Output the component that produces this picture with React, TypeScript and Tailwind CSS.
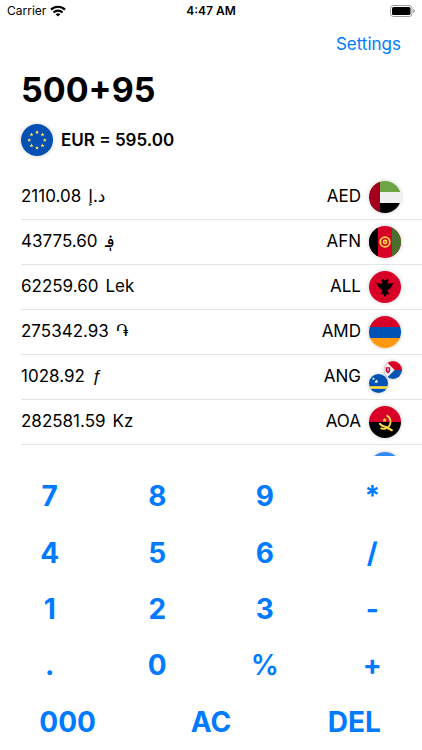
import { useState, type ReactNode } from "react";

const font = "font-['Inter','DejaVu_Sans',sans-serif]";

function Disc({ children, size = "size-8" }: { children: ReactNode; size?: string }) {
  return (
    <span className={`block shrink-0 overflow-hidden rounded-full shadow-[0_0_4px_rgba(0,0,0,0.22)] ${size}`}>
      <svg viewBox="0 0 32 32" className="block size-full" aria-hidden="true">
        {children}
      </svg>
    </span>
  );
}

function Stripes({ colors }: { colors: [string, string, string] }) {
  return (
    <>
      <rect width="32" height="11" fill={colors[0]} />
      <rect y="11" width="32" height="11" fill={colors[1]} />
      <rect y="22" width="32" height="10" fill={colors[2]} />
    </>
  );
}

const starPoints = "0,-1.9 0.6,-0.6 1.9,-0.5 0.9,0.4 1.2,1.7 0,1 -1.2,1.7 -0.9,0.4 -1.9,-0.5 -0.6,-0.6";

function EuroFlag() {
  return (
    <Disc>
      <rect width="32" height="32" fill="#0650b3" />
      {[0, 45, 90, 135, 180, 225, 270, 315].map((angle) => {
        const a = (angle * Math.PI) / 180;
        return (
          <polygon
            key={angle}
            points={starPoints}
            fill="#ffe15a"
            transform={`translate(${16 + 7.8 * Math.cos(a)} ${16 + 7.8 * Math.sin(a)})`}
          />
        );
      })}
    </Disc>
  );
}

const flags: Record<string, ReactNode> = {
  AED: (
    <Disc>
      <Stripes colors={["#6da544", "#f0f0f0", "#000000"]} />
      <rect width="11" height="32" fill="#a2001d" />
    </Disc>
  ),
  AFN: (
    <Disc>
      <rect width="32" height="32" fill="#d80027" />
      <rect width="9" height="32" fill="#000000" />
      <rect x="23" width="9" height="32" fill="#496e2d" />
      <circle cx="16" cy="16" r="4.8" fill="none" stroke="#ffda44" strokeWidth="1.8" />
      <circle cx="16" cy="16" r="2.4" fill="#ffda44" />
      <circle cx="16" cy="16" r="0.8" fill="#d80027" />
    </Disc>
  ),
  ALL: (
    <Disc>
      <rect width="32" height="32" fill="#d80027" />
      <path
        fill="#000000"
        d="M16 9.4 L14.5 8.2 L12 8.7 L13 10.3 L13.6 10.9 L12.8 12.8 L7.2 12 L9.2 14.6 L8.8 15.6 L10.4 16.2 L10.2 17.6 L12 17.4 L11.9 18.9 L13.4 18.6 L13 21.2 L11.6 22.2 L12.4 23.4 L14.2 22.4 L14.6 24 L16 25.8 L17.4 24 L17.8 22.4 L19.6 23.4 L20.4 22.2 L19 21.2 L18.6 18.6 L20.1 18.9 L20 17.4 L21.8 17.6 L21.6 16.2 L23.2 15.6 L22.8 14.6 L24.8 12 L19.2 12.8 L18.4 10.9 L19 10.3 L20 8.7 L17.5 8.2 Z"
      />
    </Disc>
  ),
  AMD: (
    <Disc>
      <Stripes colors={["#d80027", "#0052b4", "#ff9811"]} />
    </Disc>
  ),
  ANG: (
    <span className="flex size-8 shrink-0 items-end">
      <Disc size="size-[19px]">
        <rect width="32" height="32" fill="#0052b4" />
        <rect y="20.5" width="32" height="4.5" fill="#ffda44" />
        <polygon points={starPoints} fill="#ffffff" transform="translate(7.5 8) scale(1.3)" />
        <polygon points={starPoints} fill="#ffffff" transform="translate(12.5 12.5) scale(1.8)" />
      </Disc>
      <span className="-ml-1 mb-3.5">
        <Disc size="size-[18px]">
          <rect width="32" height="16" fill="#d80027" />
          <rect y="16" width="32" height="16" fill="#0052b4" />
          <path d="M0 0 H3 L19 16 L3 32 H0 Z" fill="#f0f0f0" />
          <path d="M3 11 H11 V17 Q11 20 7 22 Q3 20 3 17 Z" fill="#d80027" />
          <path d="M5.5 13 H8.5 V17 L7 19 L5.5 17 Z" fill="#a7c5e8" />
        </Disc>
      </span>
    </span>
  ),
  AOA: (
    <Disc>
      <rect width="32" height="16" fill="#d80027" />
      <rect y="16" width="32" height="16" fill="#000000" />
      <path d="M17.5 9.4 A7 7 0 1 1 11.5 22.2" fill="none" stroke="#ffda44" strokeWidth="1.9" />
      <path
        d="M11 17.8 Q13 20.4 17 21 L22.8 24.2"
        fill="none"
        stroke="#ffda44"
        strokeWidth="2.2"
        strokeLinecap="round"
      />
      <polygon points={starPoints} fill="#ffda44" transform="translate(15.6 14) scale(1.2)" />
    </Disc>
  ),
  ARS: (
    <Disc>
      <Stripes colors={["#338af3", "#f0f0f0", "#338af3"]} />
      <circle cx="16" cy="16" r="4" fill="#ffda44" />
    </Disc>
  ),
};

const rates = [
  { code: "AED", amount: "2110.08", symbol: "د.إ" },
  { code: "AFN", amount: "43775.60", symbol: "؋" },
  { code: "ALL", amount: "62259.60", symbol: "Lek" },
  { code: "AMD", amount: "275342.93", symbol: "֏" },
  { code: "ANG", amount: "1028.92", symbol: "ƒ" },
  { code: "AOA", amount: "282581.59", symbol: "Kz" },
];

const keyRows = [
  ["7", "8", "9", "*"],
  ["4", "5", "6", "/"],
  ["1", "2", "3", "-"],
  [".", "0", "%", "+"],
  ["000", "AC", "DEL"],
];

function StatusBar() {
  return (
    <div className="grid h-[22px] grid-cols-3 items-center px-[7px] text-xs">
      <div className="flex items-center gap-1">
        <span>Carrier</span>
        <svg viewBox="0 0 16 12" className="h-3 w-4" role="img" aria-label="Wi-Fi">
          <g fill="none" stroke="#000000" strokeWidth="2.2">
            <path d="M1 4.6 A10 10 0 0 1 15 4.6" />
            <path d="M3.5 7.5 A6.4 6.4 0 0 1 12.5 7.5" />
          </g>
          <path d="M8 11.6 L5.6 9.3 A3.6 3.6 0 0 1 10.4 9.3 Z" fill="#000000" />
        </svg>
      </div>
      <div className="text-center font-semibold">4:47 AM</div>
      <svg viewBox="0 0 25 12" className="h-3 w-[25px] justify-self-end" role="img" aria-label="Battery full">
        <rect x="0.5" y="0.5" width="21.5" height="11" rx="3" fill="none" stroke="#9a9a9a" />
        <rect x="2" y="2" width="18.5" height="8" rx="1.6" fill="#000000" />
        <path d="M23.2 4 Q24.8 4.6 24.8 6 Q24.8 7.4 23.2 8 Z" fill="#9a9a9a" />
      </svg>
    </div>
  );
}

export default function App() {
  const [expression, setExpression] = useState("500+95");
  const [total, setTotal] = useState("595.00");

  function press(key: string) {
    if (key === "AC") {
      setExpression("0");
      setTotal("0.00");
    } else if (key === "DEL") {
      setExpression((e) => e.slice(0, -1) || "0");
    } else {
      setExpression((e) => (e === "0" ? key : e + key));
    }
  }

  return (
    <div className={`flex h-screen flex-col bg-white text-black ${font}`}>
      <StatusBar />
      <header className="flex h-11 items-center justify-end px-[21px]">
        <button type="button" className="pt-0.5 text-[17px] text-[#007aff]">
          Settings
        </button>
      </header>
      <section className="px-[21px]">
        <output className="block h-12 text-[34px] leading-12 font-bold">{expression}</output>
        <div className="mt-2.5 mb-[19px] flex items-center gap-2 text-[17px] font-semibold">
          <EuroFlag />
          <span className="pt-0.5">EUR = {total}</span>
        </div>
      </section>
      <ul className="min-h-0 flex-1 overflow-y-auto pl-[21px] text-[17px] [scrollbar-width:none]">
        {rates.map((rate) => (
          <li key={rate.code} className="flex h-[45px] items-center border-b border-[#e5e5e5] pr-[21px]">
            <span>{rate.amount}</span>
            <bdi className={rate.symbol === "ƒ" ? "ml-[7px] font-['Liberation_Sans',sans-serif] italic" : "ml-[7px]"}>
              {rate.symbol}
            </bdi>
            <span className="mr-2 ml-auto">{rate.code}</span>
            {flags[rate.code]}
          </li>
        ))}
        <li className="flex h-[45px] items-center justify-end pr-[21px]">{flags.ARS}</li>
      </ul>
      <div className="mt-3 flex h-[282px] flex-col text-[28px] font-bold text-[#007aff]">
        {keyRows.map((row) => (
          <div key={row[0]} className="flex flex-1 gap-2">
            {row.map((key) => (
              <button
                key={key}
                type="button"
                onClick={() => press(key)}
                className={key === "%" ? "flex-1 basis-0 font-semibold" : "flex-1 basis-0"}
              >
                {key}
              </button>
            ))}
          </div>
        ))}
      </div>
    </div>
  );
}
